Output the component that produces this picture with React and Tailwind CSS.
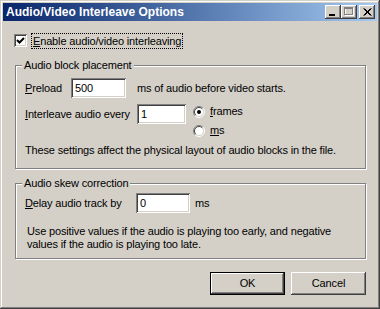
import React from 'react';

const raised = 'shadow-[inset_-1px_-1px_#404040,inset_1px_1px_#ffffff,inset_-2px_-2px_#808080,inset_2px_2px_#d4d0c8]';
const sunken = 'shadow-[inset_1px_1px_#808080,inset_-1px_-1px_#ffffff,inset_2px_2px_#404040,inset_-2px_-2px_#d4d0c8]';
const etched = 'border border-[#808080] shadow-[inset_1px_1px_#ffffff,1px_1px_#ffffff]';

function U({ children }) {
  return <span className="underline underline-offset-[1px]">{children}</span>;
}

function Radio({ checked }) {
  return (
    <svg width="12" height="12" viewBox="0 0 12 12" className="shrink-0">
      <circle cx="6" cy="6" r="5" fill="#ffffff" />
      <path d="M9.9 2.1 A5.5 5.5 0 0 0 2.1 9.9" stroke="#808080" fill="none" />
      <path d="M2.1 9.9 A5.5 5.5 0 0 0 9.9 2.1" stroke="#ffffff" fill="none" />
      <path d="M9.2 2.8 A4.5 4.5 0 0 0 2.8 9.2" stroke="#404040" fill="none" />
      <path d="M2.8 9.2 A4.5 4.5 0 0 0 9.2 2.8" stroke="#d4d0c8" fill="none" />
      {checked && <circle cx="6" cy="6" r="2" fill="#000000" />}
    </svg>
  );
}

function Field({ value, w }) {
  return (
    <div className={`${w} h-[20px] bg-white ${sunken} pl-[4px] flex items-center`}>
      {value}
    </div>
  );
}

function CaptionButton({ children, className = '' }) {
  return (
    <div className={`w-[16px] h-[14px] bg-[#d4d0c8] ${raised} flex items-center justify-center ${className}`}>
      {children}
    </div>
  );
}

function Group({ title, h, children }) {
  return (
    <div className={`relative ml-[12px] w-[351px] ${h} ${etched}`}>
      <div className="absolute -top-[7px] left-[6px] px-[2px] bg-[#d4d0c8] leading-[13px]">{title}</div>
      {children}
    </div>
  );
}

export default function App() {
  return (
    <div
      className="w-[380px] h-[309px] bg-[#d4d0c8] p-[3px] text-[11px] leading-[13px] tracking-[-0.15px] text-black shadow-[inset_-1px_-1px_#404040,inset_1px_1px_#d4d0c8,inset_-2px_-2px_#808080,inset_2px_2px_#ffffff] flex flex-col"
      style={{ fontFamily: '"Liberation Sans", Arial, sans-serif' }}
    >
      {/* title bar */}
      <div className="h-[18px] flex items-center bg-linear-to-r from-[#0a246a] to-[#a6caf0] pl-[3px] pr-[2px]">
        <span className="text-white font-bold text-[12px] tracking-normal flex-1">Audio/Video Interleave Options</span>
        <CaptionButton>
          <svg width="16" height="14"><rect x="4" y="9" width="6" height="2" fill="#000" /></svg>
        </CaptionButton>
        <CaptionButton>
          <svg width="16" height="14">
            <rect x="4.5" y="3.5" width="8" height="7" fill="none" stroke="#ffffff" />
            <rect x="3.5" y="2.5" width="8" height="7" fill="none" stroke="#808080" />
            <rect x="3" y="3" width="9" height="1" fill="#808080" />
          </svg>
        </CaptionButton>
        <CaptionButton className="ml-[2px]">
          <svg width="16" height="14">
            <path d="M4.5 3.5 L11.5 10.5 M5.5 3.5 L12.5 10.5 M11.5 3.5 L4.5 10.5 M12.5 3.5 L5.5 10.5" stroke="#000" strokeWidth="1" />
          </svg>
        </CaptionButton>
      </div>

      {/* enable checkbox */}
      <div className="mt-[13px] ml-[11px] flex items-center h-[13px]">
        <div className={`w-[13px] h-[13px] bg-white ${sunken} flex items-center justify-center`}>
          <svg width="9" height="9" viewBox="0 0 9 9">
            <path d="M1 4 L3.5 6.5 L8 2" stroke="#000" strokeWidth="2" fill="none" />
          </svg>
        </div>
        <span className="ml-[5px] px-[1px] outline outline-1 outline-dotted outline-black leading-[14px]">
          <U>E</U>nable audio/video interleaving
        </span>
      </div>

      {/* audio block placement */}
      <div className="mt-[18px]">
        <Group title="Audio block placement" h="h-[104px]">
          <div className="pl-[9px] pt-[12px] flex flex-col">
            <div className="flex items-center h-[20px]">
              <span className="w-[46px]"><U>P</U>reload</span>
              <Field value="500" w="w-[55px]" />
              <span className="ml-[11px]">ms of audio before video starts.</span>
            </div>
            <div className="flex items-start mt-[6px]">
              <span className="w-[112px] h-[20px] flex items-center"><U>I</U>nterleave audio every</span>
              <Field value="1" w="w-[49px]" />
              <div className="ml-[7px] flex flex-col -mt-[2px]">
                <div className="flex items-center h-[19px] gap-[5px]">
                  <Radio checked />
                  <span><U>f</U>rames</span>
                </div>
                <div className="flex items-center h-[19px] gap-[5px]">
                  <Radio />
                  <span><U>m</U>s</span>
                </div>
              </div>
            </div>
            <div className="mt-[3px] h-[14px] flex items-center">
              These settings affect the physical layout of audio blocks in the file.
            </div>
          </div>
        </Group>
      </div>

      {/* audio skew */}
      <div className="mt-[14px]">
        <Group title="Audio skew correction" h="h-[76px]">
          <div className="pl-[9px] pt-[9px] flex flex-col">
            <div className="flex items-center h-[20px]">
              <span className="w-[111px]"><U>D</U>elay audio track by</span>
              <Field value="0" w="w-[54px]" />
              <span className="ml-[5px]">ms</span>
            </div>
            <div className="mt-[12px] ml-[2px] leading-[13px]">
              Use positive values if the audio is playing too early, and negative<br />
              values if the audio is playing too late.
            </div>
          </div>
        </Group>
      </div>

      {/* buttons */}
      <div className="mt-[13px] flex justify-end gap-[6px] pr-[11px]">
        <div className="w-[75px] h-[23px] border border-black">
          <div className={`w-full h-full ${raised} flex items-center justify-center`}>OK</div>
        </div>
        <div className={`w-[75px] h-[23px] ${raised} flex items-center justify-center`}>Cancel</div>
      </div>
    </div>
  );
}
